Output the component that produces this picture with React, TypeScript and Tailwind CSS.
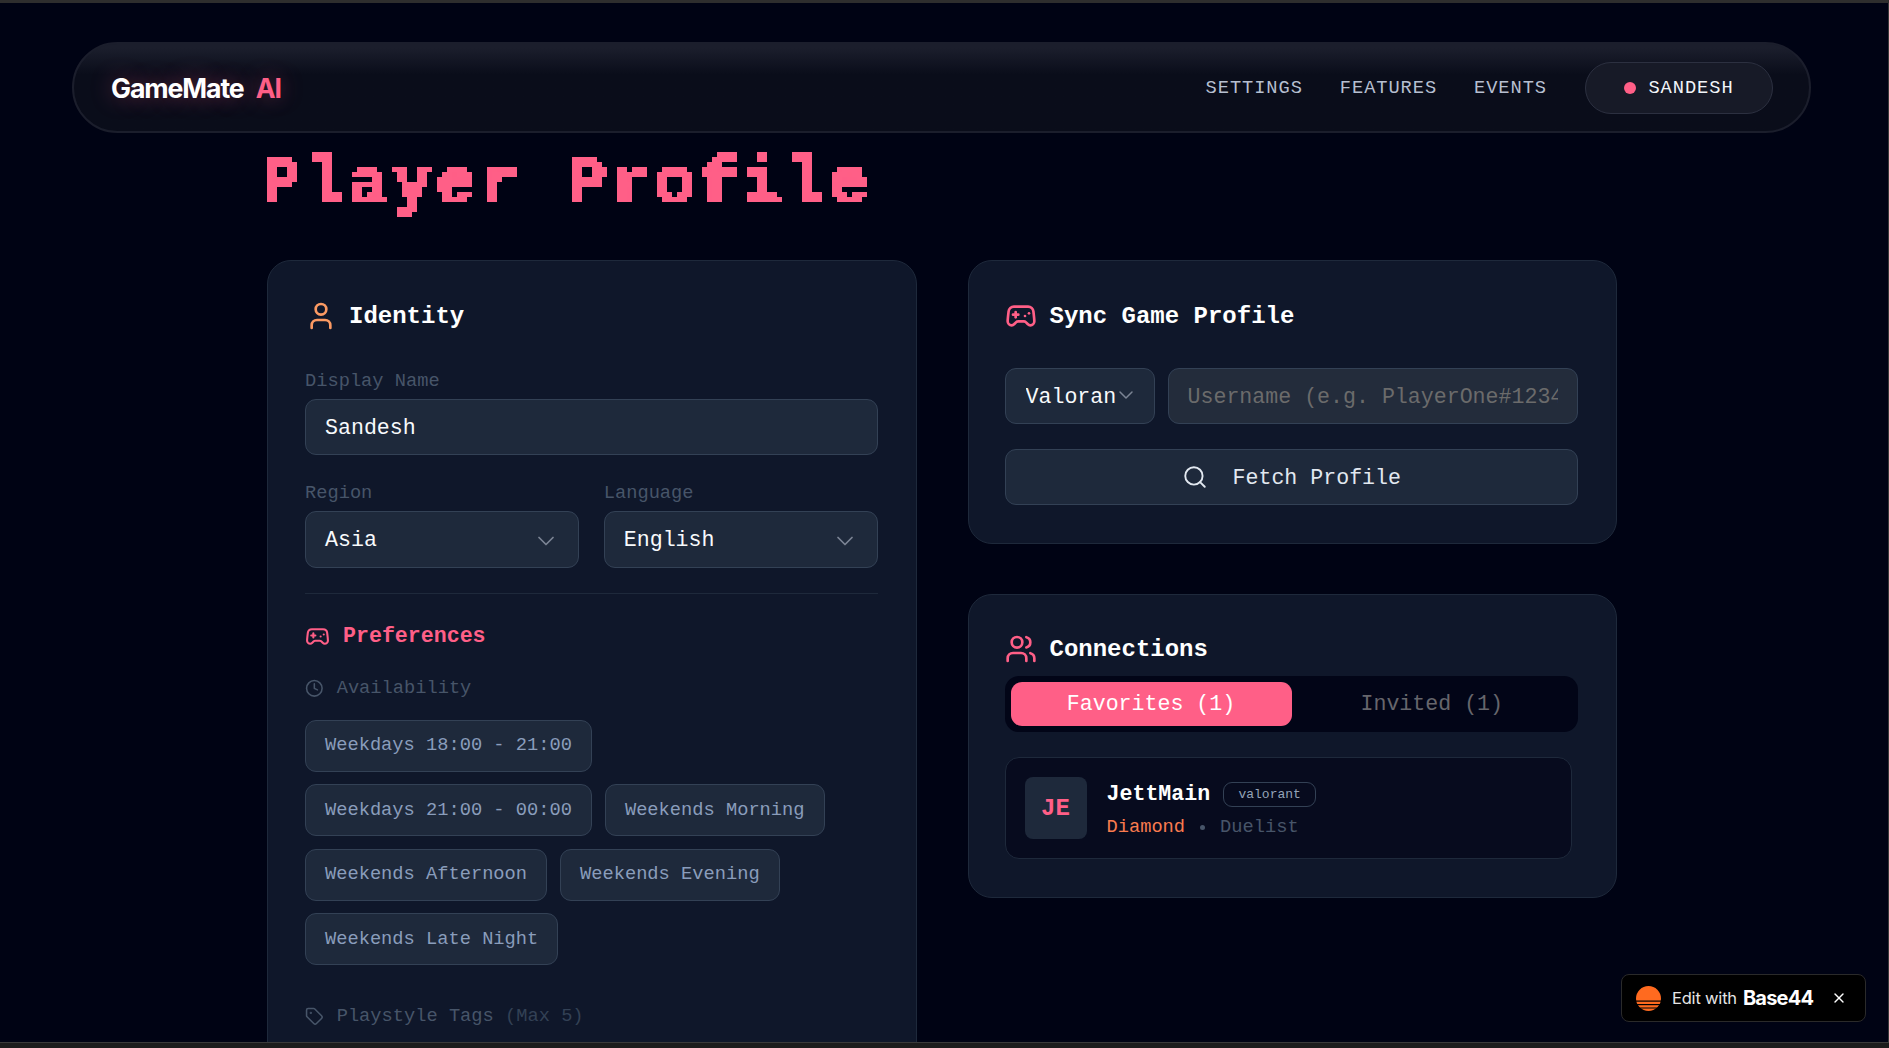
import { ChevronDown, Clock, Gamepad2, Search, Tag, User, Users, X } from "lucide-react";

const slots = [
  "Weekdays 18:00 - 21:00",
  "Weekdays 21:00 - 00:00",
  "Weekends Morning",
  "Weekends Afternoon",
  "Weekends Evening",
  "Weekends Late Night",
];

function Label({ children }: { children: React.ReactNode }) {
  return <div className="mb-[5px] pt-px text-[18.72px] leading-[25px] text-[#475569]">{children}</div>;
}

function SelectBox({ value }: { value: string }) {
  return (
    <button className="flex h-[57px] w-full items-center justify-between rounded-[11px] border border-[#334155] bg-[#1e293b] pl-[19px] pr-[18px] pt-[2px] text-[21.6px] text-[#f8fafc]">
      {value}
      <ChevronDown className="h-7 w-7 text-[#7b8494]" strokeWidth={1.5} />
    </button>
  );
}

function CardTitle({ icon, title, gap }: { icon: React.ReactNode; title: string; gap: string }) {
  return (
    <div className={`flex h-8 items-center ${gap}`}>
      {icon}
      <h2 className="pt-[2px] text-[24px] font-bold text-white">{title}</h2>
    </div>
  );
}

export default function App() {
  return (
    <div className="flex h-screen flex-col overflow-hidden bg-[#1c1c1c] font-['Liberation_Mono',monospace]">
      <svg className="absolute h-0 w-0">
        <filter id="pixelate" x="0" y="0" width="100%" height="100%" colorInterpolationFilters="sRGB">
          <feFlood x="2" y="2" width="1" height="1" floodColor="#000" />
          <feComposite width="5" height="5" />
          <feTile result="grid" />
          <feComposite in="SourceGraphic" in2="grid" operator="in" />
          <feMorphology operator="dilate" radius="2" />
          <feComponentTransfer>
            <feFuncA type="discrete" tableValues="0 1 1 1" />
          </feComponentTransfer>
        </filter>
      </svg>

      <div className="h-[3px] shrink-0 bg-[#2e2e2e]" />

      <main className="min-h-0 flex-1 overflow-hidden border-b border-r border-[#3a3a3a] bg-[#000314]">
        {/* Nav */}
        <nav className="mx-[72px] mt-[39px] flex h-[91px] w-[1739px] items-center justify-between rounded-full border-2 border-[#1b1e2c] bg-gradient-to-b from-[#1b1e2c] from-5% to-[#0a0d1a] to-35% pl-[37px] pr-[36px]">
          <div className="font-['Inter',sans-serif] text-[26.67px] font-bold tracking-[-1.1px] text-white [text-shadow:0_0_22px_rgba(255,95,135,0.4)]">
            GameMate <span className="ml-[7px] text-[#ff5f87]">AI</span>
          </div>
          <div className="flex items-center text-[18.72px] tracking-[0.93px]">
            <a className="mr-[37px] pt-[2px] text-[#b6bfd0]">SETTINGS</a>
            <a className="mr-[37px] pt-[2px] text-[#b6bfd0]">FEATURES</a>
            <a className="mr-[38px] pt-[2px] text-[#b6bfd0]">EVENTS</a>
            <div className="flex h-[52px] w-[188px] items-center justify-center gap-[12px] rounded-full border border-[#2c3040] bg-[#171a27] text-[#f1f5f9]">
              <span className="h-3 w-3 rounded-full bg-[#ff5f87]" />
              <span className="pt-[2px]">SANDESH</span>
            </div>
          </div>
        </nav>

        <div className="ml-[262px] mt-[19px]">
          <h1 className="h-[66px] text-[64px] font-bold leading-[66px] tracking-[5.3px] text-[#ff5f87] [-webkit-text-stroke:2.5px_#ff5f87] [filter:url(#pixelate)]">
            Player Profile
          </h1>
        </div>

        <div className="ml-[267px] mt-[42px] grid w-[1350px] grid-cols-2 items-start gap-[51px]">
          {/* Identity */}
          <section className="rounded-[24px] border border-[#1e293b] bg-[#0f172a] pb-[40px] pl-[37px] pr-[38px] pt-[39px]">
            <CardTitle gap="gap-3" icon={<User className="h-8 w-8 text-[#fb9a63]" />} title="Identity" />

            <div className="mt-[36px]">
              <Label>Display Name</Label>
              <input
                readOnly
                value="Sandesh"
                className="h-[56px] w-full rounded-[11px] border border-[#334155] bg-[#1e293b] px-[19px] pt-[2px] text-[21.6px] text-[#f8fafc] outline-none"
              />
            </div>

            <div className="mt-[25px] grid grid-cols-2 gap-[25px]">
              <div>
                <Label>Region</Label>
                <SelectBox value="Asia" />
              </div>
              <div>
                <Label>Language</Label>
                <SelectBox value="English" />
              </div>
            </div>

            <div className="mt-[25px] border-t border-[#1e293b]" />

            <div className="mt-[28px] flex h-[28px] items-center gap-[13px] text-[21.6px] font-bold text-[#ff5f87]">
              <Gamepad2 className="h-[25px] w-[25px]" />
              Preferences
            </div>

            <div className="mt-[26px] flex h-[25px] items-center gap-[13px] text-[18.72px] text-[#475569]">
              <Clock className="h-[18.67px] w-[18.67px]" />
              Availability
            </div>

            <div className="mt-[18.5px] flex flex-wrap gap-x-[13px] gap-y-[12.5px]">
              {slots.map((slot) => (
                <button
                  key={slot}
                  className="h-[52px] rounded-[11px] border border-[#334155] bg-[#1e293b] px-[19px] text-[18.72px] text-[#8a9dbb]"
                >
                  {slot}
                </button>
              ))}
            </div>

            <div className="mt-[39px] flex h-[25px] items-center gap-[13px] text-[18.72px] text-[#475569]">
              <Tag className="h-[18.67px] w-[18.67px]" />
              <span>
                Playstyle Tags <span className="text-[#334155]">(Max 5)</span>
              </span>
            </div>
          </section>

          <div className="flex flex-col gap-[50px]">
            {/* Sync */}
            <section className="rounded-[24px] border border-[#1e293b] bg-[#0f172a] pb-[38px] pl-[36px] pr-[38px] pt-[39px]">
              <CardTitle gap="gap-[13px]" icon={<Gamepad2 className="h-8 w-8 text-[#ff5f87]" />} title="Sync Game Profile" />
              <div className="mt-[36px] flex gap-[13px]">
                <button className="flex h-[56px] w-[150px] shrink-0 items-center rounded-[11px] border border-[#334155] bg-[#1e293b] pl-[20px] pt-[2px] text-[21.6px] text-[#f8fafc]">
                  <span className="w-[91px] overflow-hidden text-left">Valoran</span>
                  <ChevronDown className="-ml-[3px] -mt-[4px] h-[24px] w-[24px] text-[#7b8494]" strokeWidth={1.5} />
                </button>
                <input
                  readOnly
                  placeholder="Username (e.g. PlayerOne#1234)"
                  className="h-[56px] min-w-0 flex-1 rounded-[11px] border border-[#334155] bg-[#232c3b] px-[19px] pt-[2px] text-[21.6px] outline-none placeholder:text-[#6b6b6b]"
                />
              </div>
              <button className="mt-[25px] flex h-[56px] w-full items-center justify-center gap-[25px] rounded-[11px] border border-[#334155] bg-[#1e293b] text-[21.6px] font-medium text-[#e2e8f0]">
                <Search className="h-[26px] w-[26px]" strokeWidth={1.75} />
                <span className="pt-[2px]">Fetch Profile</span>
              </button>
            </section>

            {/* Connections */}
            <section className="rounded-[24px] border border-[#1e293b] bg-[#0f172a] pb-[38px] pl-[36px] pr-[38px] pt-[38px]">
              <CardTitle gap="gap-[13px]" icon={<Users className="h-8 w-8 text-[#ff5f87]" />} title="Connections" />
              <div className="mt-[11px] flex h-[56px] items-center rounded-[14px] bg-[#020517] px-[6px] text-[21.6px]">
                <div className="flex h-[44px] w-[281px] items-center justify-center rounded-[11px] bg-[#ff5f87] font-medium text-white">
                  Favorites (1)
                </div>
                <div className="flex h-[44px] flex-1 items-center justify-center text-[#66666c]">Invited (1)</div>
              </div>

              <div className="mr-[6px] mt-[25px] flex h-[102px] items-center gap-[20px] rounded-[14px] border border-[#1e293b] bg-[#070b1e] pl-[19px]">
                <div className="flex h-[62px] w-[62px] items-center justify-center rounded-[8px] bg-[#1e293b] pt-[2px] text-[24px] font-bold text-[#ff5f87]">
                  JE
                </div>
                <div className="pt-[4px]">
                  <div className="flex h-[30px] items-center gap-[13px]">
                    <span className="text-[21.6px] font-bold text-white">JettMain</span>
                    <span className="flex h-[25px] w-[93px] items-center justify-center rounded-[9px] border border-[#334155] pt-px text-[13px] text-[#94a3b8]">
                      valorant
                    </span>
                  </div>
                  <div className="mt-[4px] flex h-[27px] items-center gap-[15px] text-[18.72px] text-[#475569]">
                    <span className="text-[#f97b4f]">Diamond</span>
                    <span className="h-[5px] w-[5px] rounded-full bg-[#475569]" />
                    <span>Duelist</span>
                  </div>
                </div>
              </div>
            </section>
          </div>
        </div>
      </main>

      <div className="h-[5px] shrink-0 bg-[#1c1c1c]" />

      {/* Base44 badge */}
      <div className="fixed left-[1621px] top-[974px] flex h-[48px] w-[245px] items-center rounded-[8px] border border-[#2a2a2a] bg-black pl-[14px] font-['Inter',sans-serif] text-white">
        <svg width="25" height="25" viewBox="0 0 25 25">
          <circle cx="12.5" cy="12.5" r="12.5" fill="#ff6a1f" />
          <rect x="0" y="14.5" width="25" height="1.2" fill="#000" />
          <rect x="0" y="18" width="25" height="1.2" fill="#000" />
          <rect x="0" y="21.5" width="25" height="1" fill="#000" />
        </svg>
        <span className="ml-[11px] text-[16.5px] tracking-[-0.2px] text-[#e5e5e5]">Edit with</span>
        <span className="ml-[6px] text-[20px] font-bold tracking-[-0.8px]">Base44</span>
        <X className="ml-[18px] h-[16px] w-[16px]" />
      </div>
    </div>
  );
}
